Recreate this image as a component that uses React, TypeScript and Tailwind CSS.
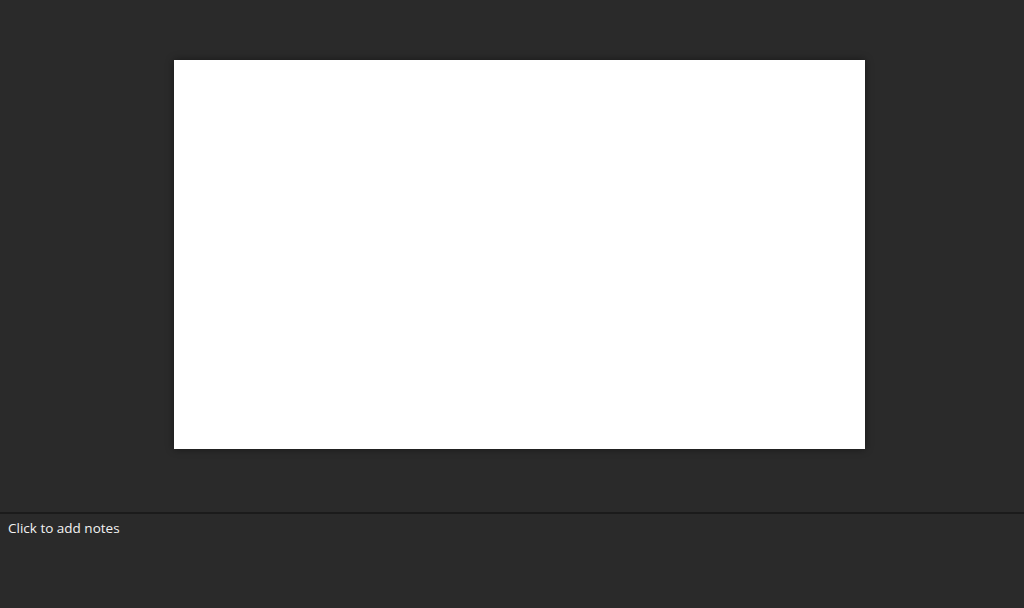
export default function App() {
  return (
    <div className="h-[608px] w-[1024px] flex flex-col bg-[#2a2a2a] overflow-hidden" style={{ fontFamily: '"Open Sans", "Noto Sans", sans-serif' }}>
      {/* Slide canvas */}
      <div className="h-[512px] flex items-center justify-center pl-[15px] pb-[3px]">
        <div className="w-[691px] h-[389px] bg-white shadow-[0_0_8px_rgba(0,0,0,0.45)]" />
      </div>

      {/* Splitter */}
      <div className="h-[2px] bg-[#1b1b1b]" />

      {/* Notes pane */}
      <div className="flex-1 px-2 pt-[4px]">
        <p className="text-[13.5px] text-[#f2f2f2] leading-5">Click to add notes</p>
      </div>
    </div>
  );
}
